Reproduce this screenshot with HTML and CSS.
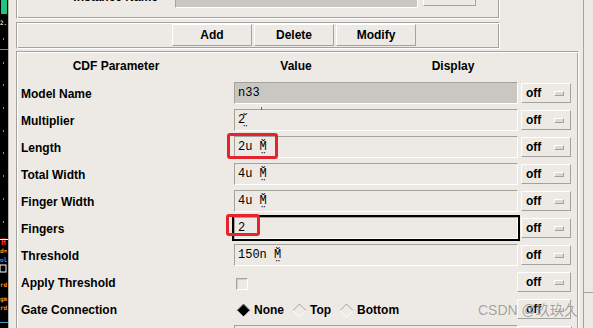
FILE: index.html
```html
<!DOCTYPE html>
<html lang="en">
<head>
    <meta charset="UTF-8">
    <meta name="viewport" content="width=device-width, initial-scale=1.0">
    <title>Edit Object Properties</title>
    <link rel="stylesheet" href="styles.css">
</head>
<body>
    <div class="screen">
        <!-- layout window peeking in on the left -->
        <div class="strip">
            <svg width="8" height="328" viewBox="0 0 8 328">
                <rect x="1" y="0" width="6" height="14" fill="#1fc47d"/>
                <text x="0" y="25" font-size="6" fill="#e6d8a8" font-family="DejaVu Sans Mono">2.</text>
                <rect x="0" y="49" width="8" height="1" fill="#3d9bd9"/>
                <rect x="3" y="38" width="1" height="2" fill="#27d13c"/>
                <rect x="3" y="62" width="1" height="2" fill="#27d13c"/>
                <rect x="3" y="84" width="1" height="2" fill="#27d13c"/>
                <rect x="3" y="107" width="1" height="2" fill="#27d13c"/>
                <rect x="3" y="130" width="1" height="2" fill="#27d13c"/>
                <rect x="3" y="152" width="1" height="2" fill="#27d13c"/>
                <rect x="3" y="175" width="1" height="2" fill="#27d13c"/>
                <rect x="3" y="198" width="1" height="2" fill="#27d13c"/>
                <rect x="3" y="221" width="1" height="2" fill="#27d13c"/>
                <text x="1" y="245" font-size="8" fill="#ff2424" font-family="DejaVu Sans Mono" font-weight="bold">H</text>
                <rect x="0" y="239" width="8" height="1" fill="#ffffff"/>
                <text x="0" y="253" font-size="6" fill="#ff8c1a" font-family="DejaVu Sans Mono">d=</text>
                <text x="0" y="262" font-size="6" fill="#3d9bd9" font-family="DejaVu Sans Mono">ol</text>
                <rect x="0" y="265" width="6" height="7" fill="none" stroke="#ffffff"/>
                <text x="0" y="287" font-size="6" fill="#ff8c1a" font-family="DejaVu Sans Mono">rd</text>
                <text x="0" y="301" font-size="6" fill="#ff8c1a" font-family="DejaVu Sans Mono">gm</text>
                <text x="0" y="310" font-size="6" fill="#ff8c1a" font-family="DejaVu Sans Mono">rd</text>
                <rect x="0" y="322" width="8" height="1" fill="#3d9bd9"/>
            </svg>
        </div>

        <div class="main">
            <div class="frame frame-top">
                <span class="inst-label">Instance Name</span>
                <span class="field field-grey inst-field"></span>
                <span class="btn inst-btn"></span>
            </div>

            <div class="frame frame-btns">
                <button class="btn">Add</button>
                <button class="btn">Delete</button>
                <button class="btn">Modify</button>
            </div>

            <div class="frame frame-cdf">
                <div class="cdf-head">
                    <span class="h-param">CDF Parameter</span>
                    <span class="h-value">Value</span>
                    <span class="h-display">Display</span>
                </div>

                <div class="row">
                    <span class="label">Model Name</span>
                    <span class="field field-grey">n33</span>
                    <span class="off">off<i></i></span>
                </div>
                <div class="row">
                    <span class="label">Multiplier</span>
                    <span class="field">2&#x30C;&#x324;</span>
                    <span class="off">off<i></i></span>
                </div>
                <div class="row">
                    <span class="label">Length</span>
                    <span class="field">2u M&#x30C;&#x324;</span>
                    <span class="off">off<i></i></span>
                </div>
                <div class="row">
                    <span class="label">Total Width</span>
                    <span class="field">4u M&#x30C;&#x324;</span>
                    <span class="off">off<i></i></span>
                </div>
                <div class="row">
                    <span class="label">Finger Width</span>
                    <span class="field">4u M&#x30C;&#x324;</span>
                    <span class="off">off<i></i></span>
                </div>
                <div class="row">
                    <span class="label">Fingers</span>
                    <span class="field field-focus">2</span>
                    <span class="off">off<i></i></span>
                </div>
                <div class="row">
                    <span class="label">Threshold</span>
                    <span class="field">150n M&#x30C;&#x324;</span>
                    <span class="off">off<i></i></span>
                </div>
                <div class="row">
                    <span class="label">Apply Threshold</span>
                    <span class="value-area"><span class="check"></span></span>
                    <span class="off off-wide">off<i></i></span>
                </div>
                <div class="row">
                    <span class="label">Gate Connection</span>
                    <span class="value-area radios">
                        <span class="radio">
                            <svg width="15" height="15" viewBox="0 0 15 15">
                                <polygon points="7.5,1 14,7.5 7.5,14 1,7.5" fill="#000"/>
                                <polyline points="1,7.5 7.5,1 14,7.5" fill="none" stroke="#7a7974"/>
                                <polyline points="1,7.5 7.5,14 14,7.5" fill="none" stroke="#ffffff"/>
                            </svg>None
                        </span>
                        <span class="radio">
                            <svg width="15" height="15" viewBox="0 0 15 15">
                                <polyline points="1,7.5 7.5,1 14,7.5" fill="none" stroke="#a3a29d"/>
                                <polyline points="1,7.5 7.5,14 14,7.5" fill="none" stroke="#ffffff"/>
                            </svg>Top
                        </span>
                        <span class="radio">
                            <svg width="15" height="15" viewBox="0 0 15 15">
                                <polyline points="1,7.5 7.5,1 14,7.5" fill="none" stroke="#a3a29d"/>
                                <polyline points="1,7.5 7.5,14 14,7.5" fill="none" stroke="#ffffff"/>
                            </svg>Bottom
                        </span>
                    </span>
                    <span class="off off-wide">off<i></i></span>
                </div>
                <div class="row">
                    <span class="label"></span>
                    <span class="field"></span>
                    <span class="off off-wide"><i></i></span>
                </div>
            </div>
        </div>

        <div class="side"><div class="side-top"></div></div>
    </div>

    <!-- annotations drawn on top of the screenshot -->
    <div class="mark mark-length"></div>
    <div class="mark mark-fingers"></div>
    <div class="tick"></div>
    <div class="watermark">CSDN @玖玖久</div>
</body>
</html>
```

FILE: styles.css
```css
body {
    margin: 0;
    background-color: #edeae5;
    font-family: "Liberation Sans", Arial, sans-serif;
    font-size: 12px;
    font-weight: bold;
    color: #000;
    overflow: hidden;
}

.screen {
    display: flex;
    height: 328px;
    overflow: hidden;
}

.strip {
    width: 8px;
    flex: none;
    background-color: #000;
}

.strip svg {
    display: block;
}

.main {
    width: 576px;
    flex: none;
    box-sizing: border-box;
    border-left: 1px solid #b4b2ad;
    border-right: 1px solid #a3a29d;
    padding-left: 7px;
}

.side {
    flex: 1;
}

.side-top {
    height: 292px;
    border-bottom: 1px solid #a3a29d;
}

/* groove frames */
.frame {
    box-sizing: border-box;
    border: 1px solid;
    border-color: #a3a29d #fff #fff #a3a29d;
    box-shadow: inset 1px 1px 0 #fff, inset -1px -1px 0 #a3a29d;
}

.frame-top {
    width: 484px;
    height: 40px;
    margin-top: -21px;
    display: flex;
    align-items: flex-end;
    padding-bottom: 10px;
}

.inst-label {
    width: 158px;
    box-sizing: border-box;
    padding-right: 17px;
    text-align: right;
    line-height: 22px;
}

.inst-field {
    width: 243px !important;
}

.inst-btn {
    width: 53px;
    height: 22px;
    margin-left: 5px;
    margin-bottom: 2px;
}

.frame-btns {
    width: 484px;
    height: 27px;
    margin-top: 3px;
    display: flex;
    align-items: flex-start;
    gap: 2px;
    padding: 1px 0 0 155px;
}

.btn {
    display: block;
    box-sizing: border-box;
    background-color: #edeae5;
    border: 1px solid;
    border-color: #fff #a3a29d #a3a29d #fff;
    font: bold 12px "Liberation Sans", Arial, sans-serif;
    color: #000;
    padding: 0;
}

.frame-btns .btn {
    width: 80px;
    height: 22px;
}

.frame-cdf {
    width: 563px;
    height: 320px;
    margin-top: 2px;
}

.cdf-head {
    display: flex;
    align-items: center;
    height: 28px;
}

.cdf-head span {
    text-align: center;
}

.h-param {
    width: 198px;
}

.h-value {
    width: 162px;
}

.h-display {
    width: 152px;
}

.row {
    display: flex;
    align-items: flex-start;
    height: 27px;
    box-sizing: border-box;
    padding-top: 2px;
}

.label {
    width: 217px;
    flex: none;
    box-sizing: border-box;
    padding: 1px 0 0 4px;
    line-height: 22px;
    white-space: nowrap;
}

.field {
    display: block;
    width: 284px;
    height: 22px;
    flex: none;
    box-sizing: border-box;
    border: 1px solid;
    border-color: #a3a29d #fff #fff #a3a29d;
    padding-left: 3px;
    font: normal 12px/20px "Liberation Mono", "DejaVu Sans Mono", monospace;
    white-space: pre;
}

.field-grey {
    background-color: #c9c7c1;
}

.field-focus {
    outline: 2px solid #000;
}

.off {
    display: flex;
    align-items: center;
    width: 50px;
    height: 20px;
    flex: none;
    box-sizing: border-box;
    margin: 1px 0 0 3px;
    padding: 1px 0 0 4px;
    border: 1px solid;
    border-color: #fff #a3a29d #a3a29d #fff;
    line-height: 17px;
}

.off i {
    display: block;
    width: 10px;
    height: 5px;
    box-sizing: border-box;
    margin: 0 6px 0 auto;
    border: 1px solid;
    border-color: #fff #a3a29d #a3a29d #fff;
    background-color: #dcd9d3;
}

.off-wide {
    width: 54px;
    margin-left: 0;
    padding-left: 8px;
}

.value-area {
    display: flex;
    width: 283px;
    flex: none;
}

.check {
    display: block;
    width: 12px;
    height: 12px;
    box-sizing: border-box;
    margin: 7px 0 0 2px;
    border: 1px solid;
    border-color: #a3a29d #fff #fff #a3a29d;
    box-shadow: inset 1px 1px 0 #d3d0ca;
}

.radios {
    align-items: center;
    height: 22px;
    padding: 1px 0 0 2px;
    box-sizing: border-box;
}

.radio {
    display: flex;
    align-items: center;
    margin-right: 8px;
}

.radio svg {
    display: block;
    margin: 2px 3px 0 0;
}

.mark {
    position: absolute;
    box-sizing: border-box;
    border: 3px solid #e5242c;
    border-radius: 3px;
}

.mark-length {
    left: 227px;
    top: 133px;
    width: 51px;
    height: 26px;
}

.mark-fingers {
    left: 226px;
    top: 214px;
    width: 34px;
    height: 22px;
}

.tick {
    position: absolute;
    left: 261px;
    top: 107px;
    width: 1px;
    height: 3px;
    background-color: #e5242c;
}

.watermark {
    position: absolute;
    left: 478px;
    top: 302px;
    font: normal 14px/16px "Liberation Sans", "Noto Sans CJK SC", sans-serif;
    color: rgba(110, 110, 110, 0.65);
    text-shadow: 0 0 1px rgba(255, 255, 255, 0.8);
    white-space: nowrap;
}
```
